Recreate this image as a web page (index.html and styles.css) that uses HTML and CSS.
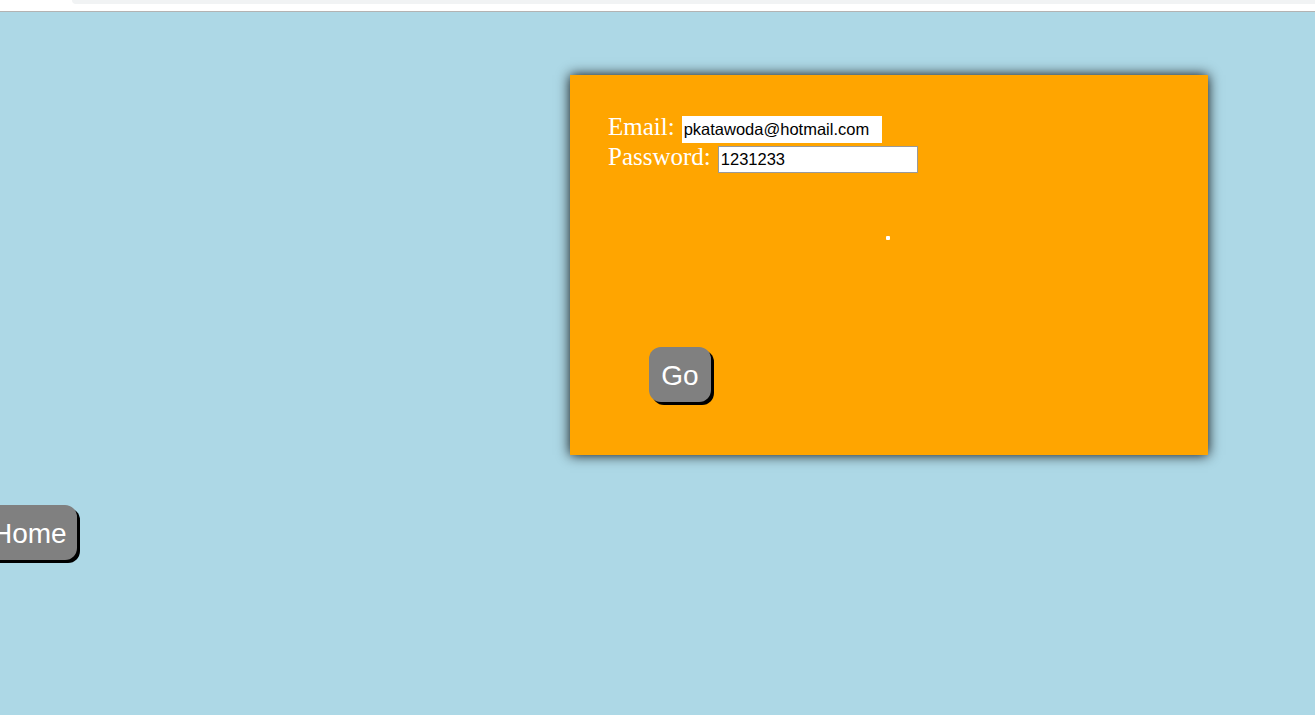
FILE: index.html
```html
<!DOCTYPE html>
<html lang="en">
<head>
<meta charset="utf-8">
<title>Login</title>
<link rel="stylesheet" href="styles.css">
</head>
<body>
<div class="chrome"><div class="chrome-tab"></div></div>
<main class="page">
  <section class="card">
    <form class="login-form">
      <div class="row"><label class="label" for="email">Email:</label><input class="field field-email" id="email" type="text" value="pkatawoda@hotmail.com"></div>
      <div class="row"><label class="label" for="password">Password:</label><input class="field field-password" id="password" type="text" value="1231233"></div>
    </form>
    <div class="dot"></div>
    <button class="btn btn-go" type="button">Go</button>
  </section>
  <button class="btn btn-home" type="button">Home</button>
</main>
</body>
</html>
```
FILE: styles.css
```css
html, body {
  margin: 0;
  padding: 0;
}
body {
  background: #add8e6;
  font-family: "Liberation Serif", "Times New Roman", serif;
  height: 715px;
  overflow: hidden;
}
.chrome {
  height: 11px;
  background: #ffffff;
  border-bottom: 1px solid #b3b3b3;
}
.chrome-tab {
  margin-left: 72px;
  height: 4px;
  background: #f1f3f4;
  border-bottom-left-radius: 6px;
}
.page {
  padding-top: 63px;
}
.card {
  box-sizing: border-box;
  margin-left: 570px;
  width: 638px;
  height: 380px;
  background: #ffa500;
  box-shadow: 0 0 12px rgba(0, 0, 0, 0.95);
  padding-top: 38px;
  padding-left: 38px;
}
.login-form {
  margin: 0;
}
.row {
  display: flex;
  align-items: baseline;
  height: 30px;
  gap: 7px;
}
.label {
  color: #ffffff;
  font-size: 25px;
  line-height: 27px;
}
.field {
  box-sizing: border-box;
  width: 200px;
  height: 27px;
  margin: 0;
  padding: 0 2px 0 1px;
  font-family: "Liberation Sans", Arial, sans-serif;
  font-size: 16.5px;
  color: #000;
  background: #fff;
  outline: none;
}
.field-email {
  border: 1px solid #fff;
}
.field-password {
  border: 1px solid #9a9a9a;
  padding-left: 2px;
}
.dot {
  width: 4px;
  height: 4px;
  border-radius: 1px;
  background: #fff;
  margin-top: 63px;
  margin-left: 278px;
}
.btn {
  display: block;
  box-sizing: border-box;
  height: 55px;
  padding: 0 12px;
  background: #808080;
  color: #fff;
  border: none;
  border-radius: 12px;
  box-shadow: 3px 3px 0 #000;
  font-family: "Liberation Sans", Arial, sans-serif;
  font-size: 28px;
  cursor: pointer;
}
.btn-go {
  width: 62px;
  margin-top: 107px;
  margin-left: 41px;
  padding: 2px 0 0;
}
.btn-home {
  width: 97px;
  margin-top: 50px;
  margin-left: -20px;
  padding-top: 2px;
}
```
